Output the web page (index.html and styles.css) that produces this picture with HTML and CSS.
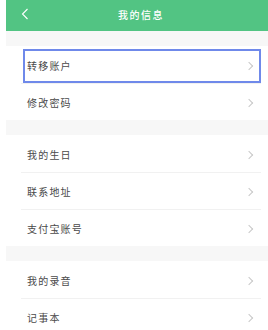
FILE: index.html
```html
<!DOCTYPE html>
<html lang="zh">
<head>
<meta charset="utf-8">
<link rel="stylesheet" href="styles.css">
</head>
<body>
<div class="page">
  <header class="header">
    <svg class="back" width="8" height="12" viewBox="0 0 8 12"><path d="M6.5 1 L1.5 6 L6.5 11" fill="none" stroke="#fff" stroke-width="1.1"/></svg>
    <div class="title">我的信息</div>
  </header>
  <div class="gap"></div>
  <div class="group">
    <div class="row focused"><span class="label">转移账户</span><span class="chev"></span></div>
    <div class="row"><span class="label">修改密码</span><span class="chev"></span></div>
  </div>
  <div class="gap"></div>
  <div class="group">
    <div class="row"><span class="label">我的生日</span><span class="chev"></span></div>
    <div class="row"><span class="label">联系地址</span><span class="chev"></span></div>
    <div class="row"><span class="label">支付宝账号</span><span class="chev"></span></div>
  </div>
  <div class="gap"></div>
  <div class="group">
    <div class="row"><span class="label">我的录音</span><span class="chev"></span></div>
    <div class="row"><span class="label">记事本</span><span class="chev"></span></div>
  </div>
</div>
</body>
</html>
```
FILE: styles.css
```css
html, body {
  margin: 0;
  padding: 0;
  background: #fff;
  font-family: "Noto Sans CJK SC", "Noto Sans", sans-serif;
}
.page {
  margin-left: 6px;
  width: 262px;
  overflow: hidden;
}
.header {
  position: relative;
  height: 31px;
  background: #52c483;
  display: flex;
  align-items: center;
  justify-content: center;
}
.back {
  position: absolute;
  left: 15px;
  top: 8px;
}
.title {
  color: #fff;
  font-size: 10px;
  letter-spacing: 1.5px;
  font-weight: 500;
  padding-left: 8px;
  margin-top: -2px;
}
.gap {
  height: 15px;
  background: #f7f7f7;
}
.group {
  display: flex;
  flex-direction: column;
}
.row {
  position: relative;
  height: 37px;
  display: flex;
  align-items: center;
  justify-content: space-between;
  padding-left: 21px;
  padding-right: 16px;
  box-sizing: border-box;
}
.row + .row::before {
  content: "";
  position: absolute;
  left: 15px;
  right: 7px;
  top: 0;
  height: 1px;
  background: #f1f1f1;
}
.label {
  font-size: 10px;
  letter-spacing: 1.2px;
  color: #4a4a4a;
  margin-top: 2px;
}
.chev {
  width: 5px;
  height: 5px;
  border-top: 1px solid #c8c8c8;
  border-right: 1px solid #c8c8c8;
  transform: rotate(45deg);
  margin-top: 2px;
}
.row.focused::after {
  content: "";
  position: absolute;
  left: 17px;
  right: 7px;
  top: 3px;
  bottom: 0;
  border: 2px solid #6f89ea;
  box-sizing: border-box;
}
```
